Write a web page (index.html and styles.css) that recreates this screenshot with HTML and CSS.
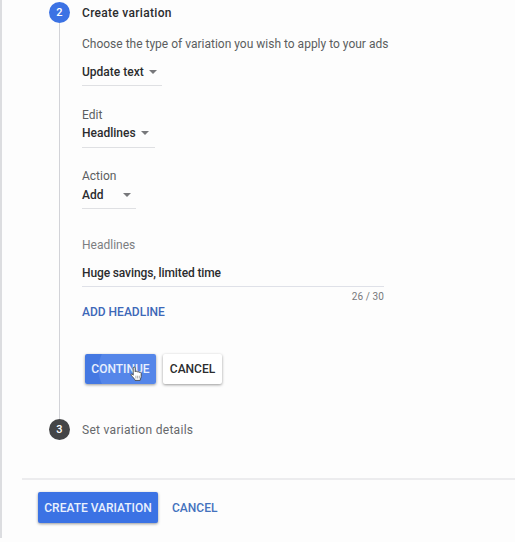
FILE: index.html
```html
<!DOCTYPE html>
<html lang="en">
<head>
    <meta charset="UTF-8">
    <meta name="viewport" content="width=device-width, initial-scale=1.0">
    <title>Create variation</title>
    <link rel="stylesheet" href="styles.css">
</head>
<body>
    <main class="panel">
        <!-- Step 2 -->
        <section class="step step-open">
            <div class="rail">
                <span class="badge badge-active">2</span>
                <span class="rail-line"></span>
            </div>
            <div class="step-body">
                <h2 class="step-title">Create variation</h2>
                <p class="hint">Choose the type of variation you wish to apply to your ads</p>

                <div class="select select-type">
                    <span>Update text</span>
                    <span class="arrow"></span>
                </div>

                <div class="label label-edit">Edit</div>
                <div class="select select-edit">
                    <span>Headlines</span>
                    <span class="arrow"></span>
                </div>

                <div class="label label-action">Action</div>
                <div class="select select-action">
                    <span>Add</span>
                    <span class="arrow"></span>
                </div>

                <div class="field">
                    <div class="field-label">Headlines</div>
                    <div class="field-value">Huge savings, limited time</div>
                    <div class="counter">26 / 30</div>
                </div>
                <a class="add-link">ADD HEADLINE</a>

                <div class="actions">
                    <button class="btn btn-continue">CONTINUE
                        <svg class="cursor" width="13" height="16" viewBox="0 0 13 16">
                            <path d="M3.2 9.2V2.1c0-1.5 2-1.5 2 0v3.7c.2-1 1.9-.9 2 .3.4-.8 1.9-.6 2 .5.5-.7 2-.4 2 .8v3.1c0 1.2-.8 1.8-1 3.9H5c-.3-1.6-2.2-3.1-3.8-5.1-.8-1.1.6-2 2-.1z" fill="#fff" stroke="#444" stroke-width=".9" stroke-linejoin="round"/>
                            <path d="M5.9 9.7v2.8M7.6 9.7v2.8M9.3 9.7v2.8" stroke="#777" stroke-width=".6"/>
                        </svg>
                    </button>
                    <button class="btn btn-cancel">CANCEL</button>
                </div>
            </div>
        </section>

        <!-- Step 3 -->
        <section class="step">
            <div class="rail">
                <span class="badge">3</span>
            </div>
            <div class="step-next">Set variation details</div>
        </section>

        <footer class="footer">
            <button class="btn btn-create">CREATE VARIATION</button>
            <a class="footer-cancel">CANCEL</a>
        </footer>
    </main>
</body>
</html>
```

FILE: styles.css
```css
* {
    box-sizing: border-box;
}

body {
    margin: 0;
    background-color: #fdfdfd;
    color: #2b2c2e;
    font-family: Roboto, Arial, sans-serif;
    font-size: 12px;
    line-height: 16px;
    overflow: hidden;
}

.panel {
    height: 538px;
    padding-top: 2px;
    border-left: 2px solid #dcdde0;
}

/* Steps */
.step {
    display: flex;
    gap: 12px;
    padding-left: 47px;
}

.step-open {
    height: 417px;
}

.rail {
    display: flex;
    flex-direction: column;
    align-items: center;
    width: 21px;
}

.badge {
    width: 21px;
    height: 21px;
    border-radius: 50%;
    background-color: #444547;
    color: #fff;
    font-size: 11px;
    font-weight: 500;
    line-height: 21px;
    text-align: center;
}

.badge-active {
    background-color: #3b72e4;
}

.rail-line {
    flex: 1;
    width: 1px;
    background-color: #d2d3d8;
}

.step-body {
    width: 302px;
    padding-top: 3px;
    white-space: nowrap;
}

.step-title {
    margin: 0;
    font-size: 12px;
    font-weight: 500;
    letter-spacing: 0.3px;
}

.hint {
    margin: 15px 0 12px;
    color: #5b5d60;
}

.select {
    display: flex;
    justify-content: space-between;
    align-items: center;
    height: 22px;
    padding: 0 5px 5px 0;
    border-bottom: 1px solid #dfe0e3;
    font-weight: 500;
}

.select-type {
    width: 80px;
}

.select-edit {
    width: 73px;
    height: 23px;
    padding: 0 6px 6px 0;
}

.select-action {
    width: 54px;
}

.arrow {
    border-left: 4px solid transparent;
    border-right: 4px solid transparent;
    border-top: 4px solid #77787b;
}

.label {
    color: #5b5d60;
}

.label-edit {
    margin: 21px 0 2px;
}

.label-action {
    margin: 20px 0 3px;
}

.field {
    margin-top: 28px;
}

.field-label {
    margin-bottom: 12px;
    color: #7c7e81;
}

.field-value {
    padding-bottom: 5px;
    border-bottom: 1px solid #dfe1e8;
    font-weight: 500;
    letter-spacing: -0.12px;
}

.counter {
    margin-top: 2px;
    color: #77797c;
    font-size: 10px;
    letter-spacing: 0.1px;
    text-align: right;
}

.add-link {
    display: block;
    margin-top: -1px;
    color: #3d68b8;
    font-weight: 500;
}

/* Buttons */
.actions {
    display: flex;
    gap: 7px;
    margin: 34px 0 0 3px;
}

.btn {
    height: 30px;
    padding: 0;
    border: none;
    border-radius: 2px;
    font-family: inherit;
    font-size: 12px;
    font-weight: 500;
    box-shadow: 0 1px 3px rgba(0, 0, 0, 0.4);
}

.btn-continue {
    position: relative;
    width: 71px;
    background: radial-gradient(circle at 48px 15px, #5586e9 34px, #4478e2 35px);
    color: #e9f0fd;
}

.cursor {
    position: absolute;
    top: 12px;
    left: 45px;
}

.btn-cancel {
    width: 59px;
    background-color: #fff;
    color: #2b2c2e;
}

.step-next {
    padding-top: 3px;
    color: #66686b;
    letter-spacing: 0.3px;
}

/* Footer */
.footer {
    display: flex;
    align-items: center;
    gap: 14px;
    margin: 38px 0 0 20px;
    padding: 12px 0 0 16px;
    border-top: 2px solid #ececee;
}

.btn-create {
    width: 120px;
    height: 31px;
    background-color: #3b72e4;
    color: #e9f0fd;
}

.footer-cancel {
    color: #4472bd;
    font-weight: 500;
}
```
